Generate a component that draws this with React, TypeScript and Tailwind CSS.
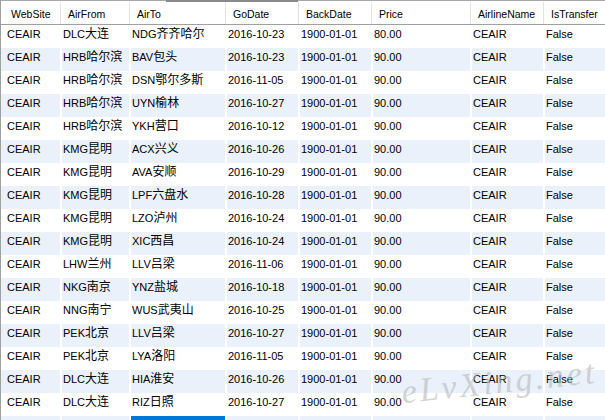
import React from "react";

type Row = { from: [string, string]; to: [string, string]; go: string; price: string };

const ROWS: Row[] = [
  { from: ["DLC", "大连"], to: ["NDG", "齐齐哈尔"], go: "2016-10-23", price: "80.00" },
  { from: ["HRB", "哈尔滨"], to: ["BAV", "包头"], go: "2016-10-23", price: "90.00" },
  { from: ["HRB", "哈尔滨"], to: ["DSN", "鄂尔多斯"], go: "2016-11-05", price: "90.00" },
  { from: ["HRB", "哈尔滨"], to: ["UYN", "榆林"], go: "2016-10-27", price: "90.00" },
  { from: ["HRB", "哈尔滨"], to: ["YKH", "营口"], go: "2016-10-12", price: "90.00" },
  { from: ["KMG", "昆明"], to: ["ACX", "兴义"], go: "2016-10-26", price: "90.00" },
  { from: ["KMG", "昆明"], to: ["AVA", "安顺"], go: "2016-10-29", price: "90.00" },
  { from: ["KMG", "昆明"], to: ["LPF", "六盘水"], go: "2016-10-28", price: "90.00" },
  { from: ["KMG", "昆明"], to: ["LZO", "泸州"], go: "2016-10-24", price: "90.00" },
  { from: ["KMG", "昆明"], to: ["XIC", "西昌"], go: "2016-10-24", price: "90.00" },
  { from: ["LHW", "兰州"], to: ["LLV", "吕梁"], go: "2016-11-06", price: "90.00" },
  { from: ["NKG", "南京"], to: ["YNZ", "盐城"], go: "2016-10-18", price: "90.00" },
  { from: ["NNG", "南宁"], to: ["WUS", "武夷山"], go: "2016-10-25", price: "90.00" },
  { from: ["PEK", "北京"], to: ["LLV", "吕梁"], go: "2016-10-27", price: "90.00" },
  { from: ["PEK", "北京"], to: ["LYA", "洛阳"], go: "2016-11-05", price: "90.00" },
  { from: ["DLC", "大连"], to: ["HIA", "淮安"], go: "2016-10-26", price: "90.00" },
  { from: ["DLC", "大连"], to: ["RIZ", "日照"], go: "2016-10-27", price: "90.00" },
];

// column widths, spelled out so Tailwind picks them up
const W = [
  "w-[59px]",
  "w-[69px]",
  "w-[96px]",
  "w-[73px]",
  "w-[73px]",
  "w-[99px]",
  "w-[73px]",
  "w-[80px]",
];

const HEADERS = ["WebSite", "AirFrom", "AirTo", "GoDate", "BackDate", "Price", "AirlineName", "IsTransfer"];

const Place = ({ p }: { p: [string, string] }) => (
  <span>
    {p[0]}
    <span className="text-[12px]">{p[1]}</span>
  </span>
);

const Cell: React.FC<{ i: number; children?: React.ReactNode; selected?: boolean }> = ({ i, children, selected }) => (
  <div
    className={`${W[i]} shrink-0 h-full flex items-center pb-[5px] whitespace-nowrap overflow-hidden ${
      i === 0 ? "pl-[6px]" : "border-l-2 border-white pl-px"
    } ${selected ? "bg-[#0078d7]" : ""}`}
  >
    {children}
  </div>
);

export default function App() {
  return (
    <div
      className="relative w-[605px] h-[420px] overflow-hidden bg-white text-black border-l border-[#a0a0a0]"
      style={{ fontFamily: '"Liberation Sans", Arial, "Noto Sans CJK SC", sans-serif' }}
    >
      {/* top edge with the scrollbar thumb */}
      <div className="flex h-[2px]">
        <div className="w-[165px] border-t border-[#a8a8a8]" />
        <div className="w-[132px] bg-[#8a8a8a]" />
        <div className="flex-1 border-t border-[#a8a8a8]" />
      </div>

      {/* header */}
      <div className="flex h-[23px] border-b border-[#a0a0a0] text-[10.5px]">
        {HEADERS.map((h, i) => (
          <div
            key={h}
            className={`${W[i]} shrink-0 flex items-center pt-[3px] whitespace-nowrap ${
              i === 0 ? "pl-[10px]" : "border-l border-[#e3e3e3] pl-[7px]"
            }`}
          >
            {h}
          </div>
        ))}
      </div>

      {/* rows */}
      <div className="text-[11px]">
        {ROWS.map((r, idx) => (
          <div key={idx} className={`flex h-[23px] ${idx % 2 === 1 ? "bg-[#eaf1fb]" : "bg-white"}`}>
            <Cell i={0}>CEAIR</Cell>
            <Cell i={1}>
              <Place p={r.from} />
            </Cell>
            <Cell i={2}>
              <Place p={r.to} />
            </Cell>
            <Cell i={3}>{r.go}</Cell>
            <Cell i={4}>1900-01-01</Cell>
            <Cell i={5}>{r.price}</Cell>
            <Cell i={6}>CEAIR</Cell>
            <Cell i={7}>False</Cell>
          </div>
        ))}
        {/* next row, cut off by the window; AirTo cell is selected */}
        <div className="flex h-[23px] bg-[#eaf1fb]">
          {W.map((_, i) => (
            <Cell key={i} i={i} selected={i === 2} />
          ))}
        </div>
      </div>

      {/* watermark */}
      <div
        className="absolute left-[400px] top-[356px] text-[34px] italic tracking-[3px] text-[#b8b8b8] opacity-60 -rotate-6 pointer-events-none select-none"
        style={{ fontFamily: '"Liberation Serif", serif' }}
      >
        eLvXing.net
      </div>
    </div>
  );
}
